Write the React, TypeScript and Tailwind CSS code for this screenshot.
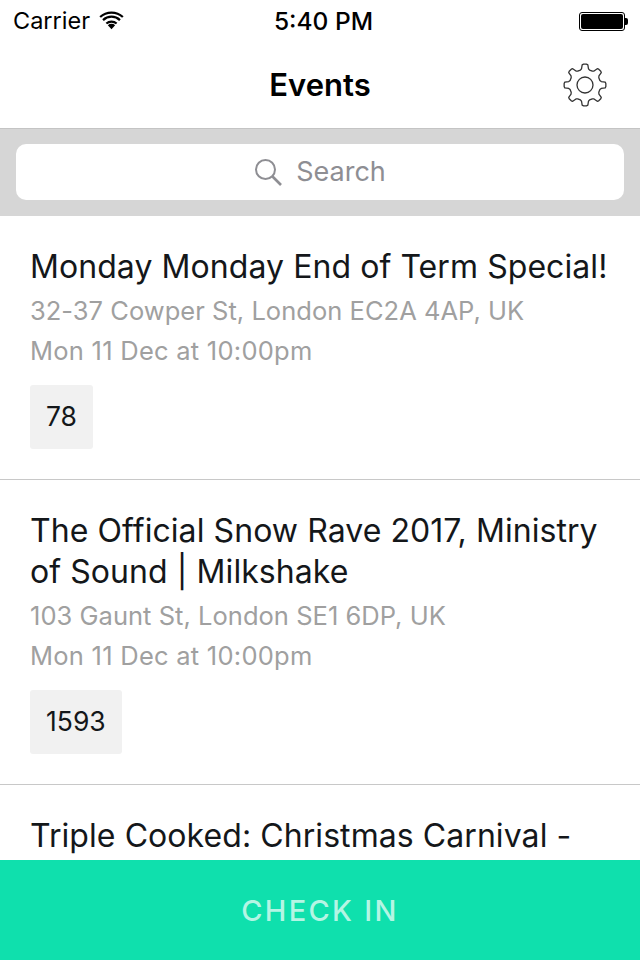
type EventItem = {
  title: string;
  address?: string;
  date?: string;
  count?: number;
};

const events: EventItem[] = [
  {
    title: "Monday Monday End of Term Special!",
    address: "32-37 Cowper St, London EC2A 4AP, UK",
    date: "Mon 11 Dec at 10:00pm",
    count: 78,
  },
  {
    title: "The Official Snow Rave 2017, Ministry of Sound | Milkshake",
    address: "103 Gaunt St, London SE1 6DP, UK",
    date: "Mon 11 Dec at 10:00pm",
    count: 1593,
  },
  // only the title of this one shows above the button
  { title: "Triple Cooked: Christmas Carnival -" },
];

function gearPath() {
  const pts: string[] = [];
  const cx = 24;
  const cy = 24;
  for (let i = 0; i < 8; i++) {
    const a = (i * Math.PI) / 4 - Math.PI / 2;
    const spots: [number, number][] = [
      [15.6, -0.3],
      [16.6, -0.21],
      [20.4, -0.14],
      [20.9, -0.07],
      [20.9, 0.07],
      [20.4, 0.14],
      [16.6, 0.21],
      [15.6, 0.3],
    ];
    for (const [r, d] of spots) {
      const x = cx + r * Math.cos(a + d);
      const y = cy + r * Math.sin(a + d);
      pts.push(`${pts.length ? "L" : "M"}${x.toFixed(2)} ${y.toFixed(2)}`);
    }
  }
  return pts.join(" ") + " Z";
}

function Gear() {
  return (
    <svg
      width="48"
      height="48"
      viewBox="0 0 48 48"
      fill="none"
      stroke="#333"
      strokeWidth="1.3"
      strokeLinejoin="round"
      className="absolute right-[31px] top-[20.5px]"
    >
      <path d={gearPath()} />
      <circle cx="24" cy="24" r="8" />
    </svg>
  );
}

function Wifi() {
  return (
    <svg width="25" height="20" viewBox="0 0 26 20" fill="#000">
      <path d="M13 18.5 9.2 14.3a5.6 5.6 0 0 1 7.6 0z" />
      <path d="M6.9 11.9a9 9 0 0 1 12.2 0l-1.5 1.6a6.8 6.8 0 0 0-9.2 0z" />
      <path d="M3.4 8.2a14 14 0 0 1 19.2 0l-1.6 1.7a11.7 11.7 0 0 0-16 0z" />
      <path d="M0.4 5A18.6 18.6 0 0 1 25.6 5l-1.6 1.7a16.2 16.2 0 0 0-22 0z" />
    </svg>
  );
}

function Battery() {
  return (
    <div className="flex items-center">
      <div className="w-[46px] h-[19px] rounded-[3px] border border-black p-[1px]">
        <div className="w-full h-full rounded-[2px] bg-black" />
      </div>
      <div className="w-[3px] h-[7px] rounded-r-[2px] bg-black" />
    </div>
  );
}

function EventRow({ title, address, date, count }: EventItem) {
  return (
    <div className="border-b border-[#c8c8c8] px-[30px] pt-[31.3px] pb-[29.9px] last:border-b-0">
      <div className="text-[32px] leading-[40.5px] tracking-[0.07px] text-[#14171a]">{title}</div>
      {address && (
        <div className="mt-[3.5px] text-[25.5px] leading-[40px] tracking-[0.03px] text-[#a0a0a0]">{address}</div>
      )}
      {date && <div className="text-[25.5px] leading-[40px] tracking-[0.25px] text-[#a0a0a0]">{date}</div>}
      {count !== undefined && (
        <div className="mt-[14px] flex">
          <div className="h-[64px] px-[16px] flex items-center rounded-[3px] bg-[#f1f1f1] text-[26.5px] text-[#14171a]">
            {count}
          </div>
        </div>
      )}
    </div>
  );
}

export default function App() {
  return (
    <div className="w-[640px] h-[960px] flex flex-col overflow-hidden bg-white font-['Inter','Liberation_Sans',sans-serif]">
      {/* status bar */}
      <div className="h-[40px] shrink-0 pl-[13px] pr-[12px] pt-[2px] flex items-center justify-between text-black">
        <div className="w-[206px] flex items-center gap-[9px] text-[23.5px]">
          <span>Carrier</span>
          <Wifi />
        </div>
        <div className="text-[24.5px] font-medium">5:40 PM</div>
        <div className="w-[200px] flex justify-end">
          <Battery />
        </div>
      </div>

      {/* nav bar */}
      <div className="h-[89px] shrink-0 border-b border-[#c4c4c4] relative flex items-center justify-center pt-[2px]">
        <span className="text-[31px] font-semibold text-black">Events</span>
        <Gear />
      </div>

      {/* search */}
      <div className="h-[87px] shrink-0 bg-[#d6d6d6] px-[16px] pt-[15px]">
        <div className="h-[56px] rounded-[10px] bg-white flex items-center justify-center gap-[14px] text-[#8e8e93]">
          <svg width="28" height="28" viewBox="0 0 28 28" fill="none" stroke="#8e8e93" strokeWidth="2">
            <circle cx="11.5" cy="11.5" r="9.5" />
            <path d="M18.5 18.5 27 27" strokeWidth="2.6" />
          </svg>
          <span className="text-[27px]">Search</span>
        </div>
      </div>

      {/* list */}
      <div className="flex-1 min-h-0 overflow-hidden">
        {events.map((e) => (
          <EventRow key={e.title} {...e} />
        ))}
      </div>

      <div className="h-[100px] shrink-0 bg-[#0fe0ad] flex items-center justify-center pt-[2px] text-[29px] font-medium tracking-[2.3px] text-[#b4f5e4]">
        CHECK IN
      </div>
    </div>
  );
}
